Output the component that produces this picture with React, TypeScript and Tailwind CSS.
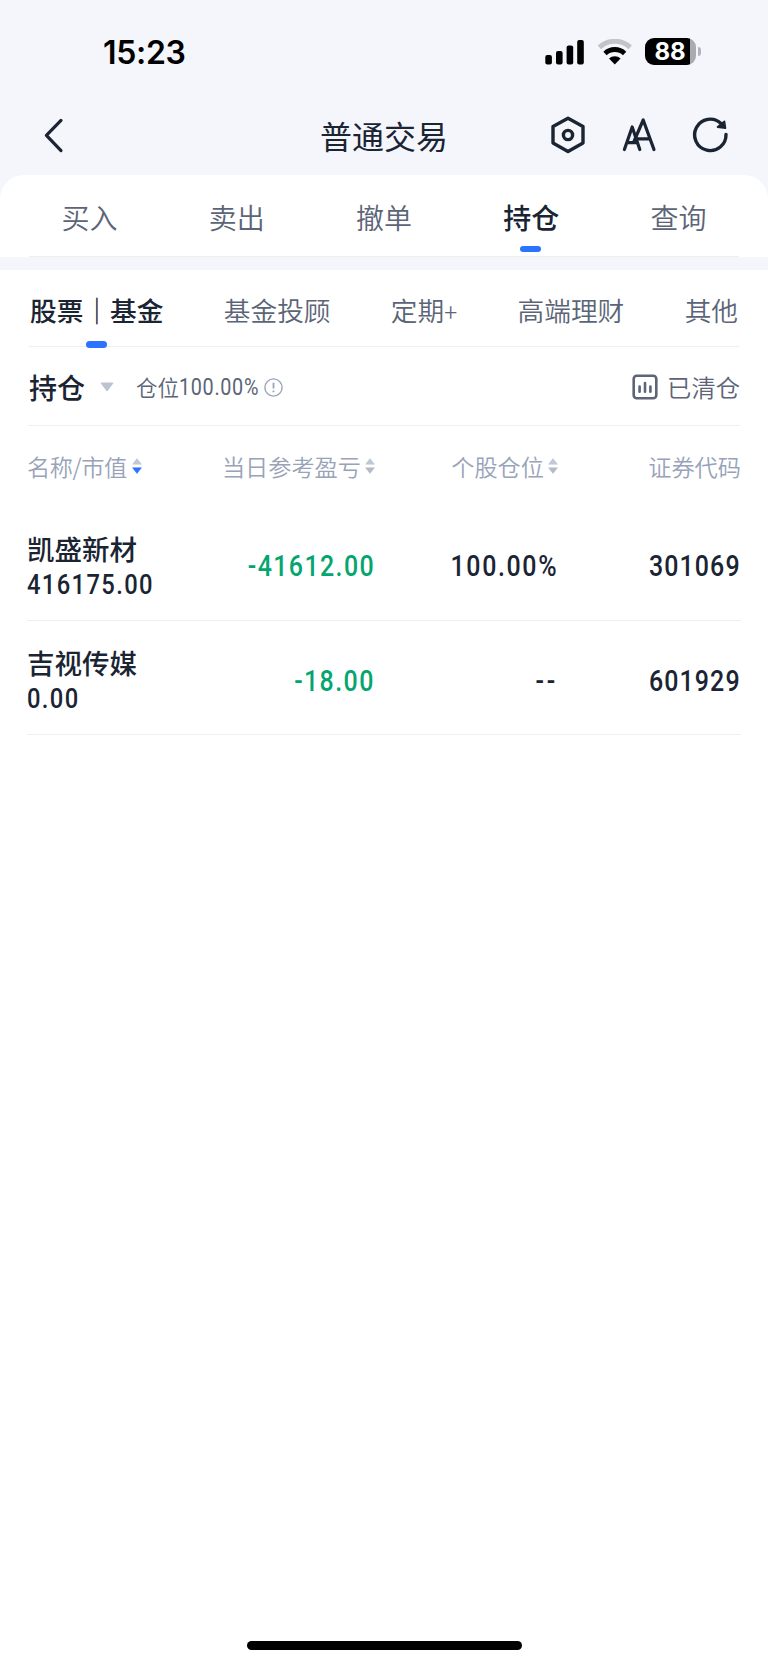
import React from 'react'
import clsx from 'clsx'

interface Holding {
  name: string
  marketValue: string
  dayProfit: string
  ratio: string
  code: string
}

const MAIN_TABS = ['买入', '卖出', '撤单', '持仓', '查询']
const SUB_TABS = ['股票｜基金', '基金投顾', '定期+', '高端理财', '其他']

const COLUMNS: { label: string; sort?: 'none' | 'desc' }[] = [
  { label: '名称/市值', sort: 'desc' },
  { label: '当日参考盈亏', sort: 'none' },
  { label: '个股仓位', sort: 'none' },
  { label: '证券代码' },
]

const HOLDINGS: Holding[] = [
  { name: '凯盛新材', marketValue: '416175.00', dayProfit: '-41612.00', ratio: '100.00%', code: '301069' },
  { name: '吉视传媒', marketValue: '0.00', dayProfit: '-18.00', ratio: '--', code: '601929' },
]

const GRID = 'grid grid-cols-[171px_176px_183px_183px] pl-[27px]'
const NUM = 'inline-block font-[Roboto,sans-serif] font-medium leading-[28px]'
const NUM_RIGHT = 'mr-[-1px] origin-right scale-x-[0.86] text-[29px]'

function StatusBar() {
  return (
    <div className="flex h-[103px] items-center justify-between pl-[103px] pr-[67px]">
      <span className="pt-[2px] font-[Inter,sans-serif] text-[32px] leading-none font-semibold tracking-[-0.3px] text-black">15:23</span>
      <div className="flex items-center">
        <svg width="40" height="26" viewBox="0 0 40 26" fill="#000">
          <rect x="0.3" y="16" width="6.6" height="9.5" rx="2" />
          <rect x="11" y="12" width="6.6" height="13.5" rx="2" />
          <rect x="21.6" y="6.6" width="6.6" height="18.9" rx="2" />
          <rect x="32.2" y="1" width="6.6" height="24.5" rx="2" />
        </svg>
        <svg className="ml-[12px]" width="36" height="26" viewBox="0 0 36 26">
          <path d="M2.4 8.4 A22.4 22.4 0 0 1 33.2 8.4" fill="none" stroke="#c3c4c9" strokeWidth="5" />
          <path d="M8 14.4 A14.2 14.2 0 0 1 27.6 14.4" fill="none" stroke="#000" strokeWidth="4.8" />
          <path d="M12 19.6 A8.2 8.2 0 0 1 23.6 19.6 L17.8 25.6 Z" fill="#000" />
        </svg>
        <div className="ml-[12px] flex h-[27px] w-[51px] items-center overflow-hidden rounded-[9px] bg-[linear-gradient(to_right,#000_45px,#aaabb0_45px)]">
          <span className="w-[50px] pt-px text-center font-[Inter,sans-serif] text-[24px] leading-none font-bold text-white">88</span>
        </div>
        <div className="ml-[2px] h-[9px] w-[3px] rounded-r-full bg-[#b3b4b9]" />
      </div>
    </div>
  )
}

function NavBar() {
  return (
    <div className="grid h-[72px] grid-cols-[1fr_auto_1fr] pt-[11px] text-[#1a2433]">
      <svg className="mt-[2px] ml-[41px]" width="24" height="38" viewBox="0 0 24 38" fill="none" stroke="currentColor" strokeWidth="3.2" strokeLinecap="round" strokeLinejoin="round">
        <path d="M20 4.4 L5.4 19.4 L20 34.6" />
      </svg>
      <h1 className="text-[32px] leading-[42px]">普通交易</h1>
      <div className="flex justify-end pr-[38px]">
        <svg width="40" height="40" viewBox="0 0 40 40" fill="none" stroke="currentColor" strokeWidth="3.4" strokeLinejoin="round">
          <path d="M20 4.3 L35 12.4 V29 L20 37.5 L5 29 V12.4 Z" />
          <circle cx="20" cy="21" r="4.6" />
        </svg>
        <svg className="ml-[31px]" width="40" height="40" viewBox="0 0 40 40" fill="none" stroke="currentColor" strokeWidth="3.2" strokeLinecap="round" strokeLinejoin="round">
          <path d="M5.4 35.6 L13.2 13 L20.8 35.6 M8.4 28.6 H18.4" />
          <path d="M15 27.4 L24.2 6 L35 35.6 M17.4 24.8 H30.8" />
        </svg>
        <svg className="ml-[31px]" width="40" height="40" viewBox="0 0 40 40" fill="none" stroke="currentColor" strokeWidth="3.4" strokeLinecap="round">
          <path d="M36 20.4 A15.7 15.7 0 1 1 31 9.4" />
          <path d="M34.4 7.4 L35.4 14.2 L27.6 13 Z" fill="currentColor" strokeWidth="1.8" strokeLinejoin="round" />
        </svg>
      </div>
    </div>
  )
}

function SortIcon({ sort }: { sort: 'none' | 'desc' }) {
  return (
    <svg width="10" height="16" viewBox="0 0 10 16">
      <path d="M5 0.6 L9.4 6.2 H0.6 Z" fill="#c1c7d4" stroke="#c1c7d4" strokeWidth="0.6" strokeLinejoin="round" />
      <path
        d="M5 15.4 L9.4 9.8 H0.6 Z"
        fill={sort === 'desc' ? '#2b74ff' : '#b3bac9'}
        stroke={sort === 'desc' ? '#2b74ff' : '#b3bac9'}
        strokeWidth="0.6"
        strokeLinejoin="round"
      />
    </svg>
  )
}

function HoldingRow({ item }: { item: Holding }) {
  return (
    <div className={clsx(GRID, 'h-[113.5px] text-[#1a2433]')}>
      <div className="pt-[23.5px]">
        <div className="text-[27.5px] leading-[36px] font-medium">{item.name}</div>
        <div className="flex pt-[5px]">
          <span className={clsx(NUM, 'origin-left scale-x-[0.86] text-[27.6px] tracking-[1.6px]')}>{item.marketValue}</span>
        </div>
      </div>
      <div className="flex justify-end pt-[46px] text-[#05a56f]">
        <span className={clsx(NUM, NUM_RIGHT, 'tracking-[1.65px]')}>{item.dayProfit}</span>
      </div>
      <div className="flex justify-end pt-[46px]">
        <span className={clsx(NUM, NUM_RIGHT, item.ratio === '--' ? 'tracking-[3px]' : 'tracking-[1.9px]')}>{item.ratio}</span>
      </div>
      <div className="flex justify-end pt-[46px]">
        <span className={clsx(NUM, NUM_RIGHT, 'tracking-[1.3px]')}>{item.code}</span>
      </div>
    </div>
  )
}

export default function App() {
  return (
    <div className="flex h-[1665px] w-[768px] flex-col bg-[#f4f6fb] font-['Noto_Sans_CJK_SC',sans-serif]">
      <StatusBar />
      <NavBar />

      {/* Main tabs */}
      <div className="h-[82px] rounded-t-[24px] bg-white">
        <div className="grid h-full grid-cols-5 px-4">
          {MAIN_TABS.map((tab) => {
            const active = tab === '持仓'
            return (
              <div key={tab} className="flex flex-col items-center pt-[22px]">
                <span className={clsx('text-[28px] leading-[40px]', active ? 'font-medium text-[#1a2433]' : 'font-[350] text-[#5b6577]')}>{tab}</span>
                {active && <span className="mt-[9px] mr-[2px] h-[6px] w-[21px] rounded-full bg-[#2b74ff]" />}
              </div>
            )
          })}
        </div>
        <div className="mx-[29px] -mt-px h-px bg-[#f3eef0]" />
      </div>

      <div className="mt-[13px] flex flex-1 flex-col bg-white">
        {/* Sub tabs */}
        <div className="mx-[29px] flex h-[77px] justify-between border-b border-[#eeeff1] pr-px pl-[1px]">
          {SUB_TABS.map((tab, idx) => (
            <div key={tab} className="flex flex-col items-center pt-[20px]">
              <span className={clsx('text-[26.7px] leading-[40px]', idx === 0 ? 'font-medium text-[#1a2433]' : 'font-[350] text-[#5b6577]')}>
                {tab === '定期+' ? (
                  <>定期<span className="font-[Roboto] text-[23px]">+</span></>
                ) : idx === 0 ? (
                  <>股票<span className="font-black">｜</span>基金</>
                ) : (
                  tab
                )}
              </span>
              {idx === 0 && <span className="mt-[11px] h-[7px] w-[21px] shrink-0 rounded-full bg-[#2b74ff]" />}
            </div>
          ))}
        </div>

        {/* Position summary */}
        <div className="mx-[28px] flex h-[79px] items-center border-b border-[#eeeff1] pt-[2px] text-[#5b6577]">
          <span className="ml-px text-[28px] leading-none font-medium text-[#1a2433]">持仓</span>
          <svg className="ml-[15px]" width="14" height="10" viewBox="0 0 14 10">
            <path d="M1 1 H13 L7 9 Z" fill="#bcc3d1" stroke="#bcc3d1" strokeLinejoin="round" />
          </svg>
          <span className="ml-[22px] text-[21.5px] leading-none font-[350]">仓位</span>
          <span className="inline-block w-[79px] origin-left scale-x-[0.86] pt-px font-[Roboto] text-[23px] leading-none font-normal tracking-[0.8px]">100.00%</span>
          <svg className="ml-[6px]" width="19" height="19" viewBox="0 0 19 19" fill="none" stroke="#9aa5ba" strokeWidth="1.4">
            <circle cx="9.5" cy="9.5" r="8.6" />
            <path d="M9.5 4.8 V10.6 M9.5 12.4 V14.2" strokeWidth="1.8" />
          </svg>
          <svg className="ml-auto" width="26" height="26" viewBox="0 0 26 26" fill="none" stroke="currentColor" strokeWidth="2.6" strokeLinecap="round">
            <rect x="1.7" y="1.7" width="22.6" height="22.6" rx="3" />
            <path d="M7.6 12.6 V17.8 M13 9 V17.8 M18.4 12.6 V17.8" />
          </svg>
          <span className="ml-[9px] pt-px text-[24.3px] leading-none font-[350]">已清仓</span>
        </div>

        {/* Table head */}
        <div className={clsx(GRID, 'h-[80px] items-center text-[23.2px] font-[350] text-[#98a3b8]')}>
          {COLUMNS.map((col, idx) => (
            <div key={col.label} className={clsx('flex items-center', idx > 0 ? '-mr-px justify-end gap-[4px]' : 'gap-[5px] tracking-[-0.4px]')}>
              {col.label}
              {col.sort && <SortIcon sort={col.sort} />}
            </div>
          ))}
        </div>

        {HOLDINGS.map((item) => (
          <React.Fragment key={item.code}>
            <HoldingRow item={item} />
            <div className="mx-[27px] h-px shrink-0 bg-[#eeeff1]" />
          </React.Fragment>
        ))}

        {/* Home indicator */}
        <div className="mx-auto mt-auto mb-[15px] h-[9px] w-[275px] rounded-full bg-black" />
      </div>
    </div>
  )
}
